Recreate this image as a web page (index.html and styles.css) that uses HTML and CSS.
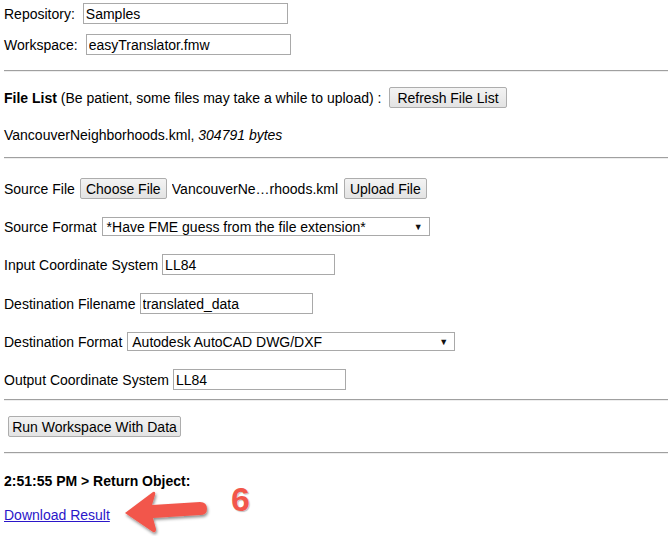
FILE: index.html
```html
<!DOCTYPE html>
<html>
<head>
<meta charset="utf-8">
<link rel="stylesheet" href="styles.css">
</head>
<body>
<div class="page">
  <div class="row r1"><span>Repository:</span><input class="txt w204 g8" value="Samples"></div>
  <div class="row r2"><span>Workspace:</span><input class="txt w204 g8" value="easyTranslator.fmw"></div>
  <div class="rule h1"></div>
  <div class="row r3"><span><b>File List</b> (Be patient, some files may take a while to upload) :</span><button class="btn g9">Refresh File List</button></div>
  <div class="row r4"><span>VancouverNeighborhoods.kml, <i>304791 bytes</i></span></div>
  <div class="rule h2"></div>
  <div class="row r5"><span>Source File</span><button class="btn choose g5">Choose File</button><span class="fname">VancouverNe…rhoods.kml</span><button class="btn upload">Upload File</button></div>
  <div class="row r6"><span>Source Format</span><div class="sel g5"><span>*Have FME guess from the file extension*</span><span class="caret">▼</span></div></div>
  <div class="row r7"><span>Input Coordinate System</span><input class="txt w173 g4" value="LL84"></div>
  <div class="row r8"><span>Destination Filename</span><input class="txt w173 g4" value="translated_data"></div>
  <div class="row r9"><span>Destination Format</span><div class="sel g5"><span>Autodesk AutoCAD DWG/DXF</span><span class="caret">▼</span></div></div>
  <div class="row r10"><span>Output Coordinate System</span><input class="txt w173 g4" value="LL84"></div>
  <div class="rule h3"></div>
  <div class="row r11"><button class="btn run">Run Workspace With Data</button></div>
  <div class="rule h4"></div>
  <div class="row r12"><b>2:51:55 PM &gt; Return Object:</b></div>
  <div class="row r13"><a href="#" class="dl">Download Result</a></div>

  <svg class="arrow" width="100" height="54" viewBox="0 0 100 54">
    <defs>
      <filter id="sh" x="-20%" y="-20%" width="140%" height="150%">
        <feDropShadow dx="1" dy="2" stdDeviation="1.5" flood-color="#000" flood-opacity="0.45"/>
      </filter>
    </defs>
    <path filter="url(#sh)" fill="#f2574b" d="M7 28 L35 7 Q38 6 37 10 L34 20 L82 17 Q89 17 89 24 Q89 30 82 30 L35 33 L38 44 Q38 48 35 47 Z"/>
  </svg>
  <span class="badge">6</span>
</div>
</body>
</html>
```
FILE: styles.css
```css
html, body {
  margin: 0;
  padding: 0;
  background: #fff;
}
.page {
  position: relative;
  width: 668px;
  height: 536px;
  overflow: hidden;
  padding: 3px 0 0 4px;
  box-sizing: border-box;
  font-family: Arial, "Liberation Sans", sans-serif;
  font-size: 14px;
  color: #000;
}
.row {
  display: flex;
  align-items: center;
  height: 21px;
  white-space: nowrap;
}
.r2 { margin-top: 10px; }
.r3 { margin-top: 15px; }
.r4 { margin-top: 16px; }
.r5 { margin-top: 19px; }
.r6 { margin-top: 17px; }
.r7 { margin-top: 17px; }
.r8 { margin-top: 18px; }
.r9 { margin-top: 17px; }
.r10 { margin-top: 17px; }
.r11 { margin-top: 15px; }
.r12 { margin-top: 16px; }
.r13 { margin-top: 13px; }

.rule {
  height: 0;
  border-top: 1px solid #a0a0a0;
  border-bottom: 1px solid #eeeeee;
}
.h1 { margin-top: 15px; }
.h2 { margin-top: 12px; }
.h3 { margin-top: 9px; }
.h4 { margin-top: 15px; }

.g4 { margin-left: 4px; }
.g5 { margin-left: 5px; }
.g8 { margin-left: 8px; }
.g9 { margin-left: 8px; }

.txt {
  box-sizing: border-box;
  height: 21px;
  border: 1px solid #a9a9a9;
  padding: 0 2px;
  font-family: Arial, "Liberation Sans", sans-serif;
  font-size: 14px;
  color: #000;
  background: #fff;
  outline: none;
}
.w204 { width: 205px; }
.w173 { width: 173px; }

.btn {
  box-sizing: border-box;
  height: 21px;
  padding: 0 7px;
  border: 1px solid #adadad;
  border-radius: 2px;
  background: linear-gradient(#f3f3f3, #e3e3e3);
  font-family: Arial, "Liberation Sans", sans-serif;
  font-size: 14px;
  color: #000;
}
.choose { width: 87px; padding: 0; }
.fname {
  margin-left: 5px;
  width: 172px;
  overflow: hidden;
}
.upload { width: 83px; padding: 0; }
.run { margin-left: 4px; width: 173px; padding: 0; }

.sel {
  box-sizing: border-box;
  width: 328px;
  height: 19px;
  border: 1px solid #a9a9a9;
  display: flex;
  align-items: center;
  justify-content: space-between;
  padding: 0 6px 0 4px;
  background: #fff;
}
.caret {
  font-size: 9px;
  color: #111;
}

.dl {
  color: #2b16c9;
  text-decoration: underline;
}

.arrow {
  position: absolute;
  left: 118px;
  top: 485px;
}
.badge {
  position: absolute;
  left: 231px;
  top: 480px;
  font-family: Arial, "Liberation Sans", sans-serif;
  font-weight: bold;
  font-size: 34px;
  color: #f2574b;
  text-shadow: 0 0 1px #fff, 1px 1px 1px #bbb;
}
```
